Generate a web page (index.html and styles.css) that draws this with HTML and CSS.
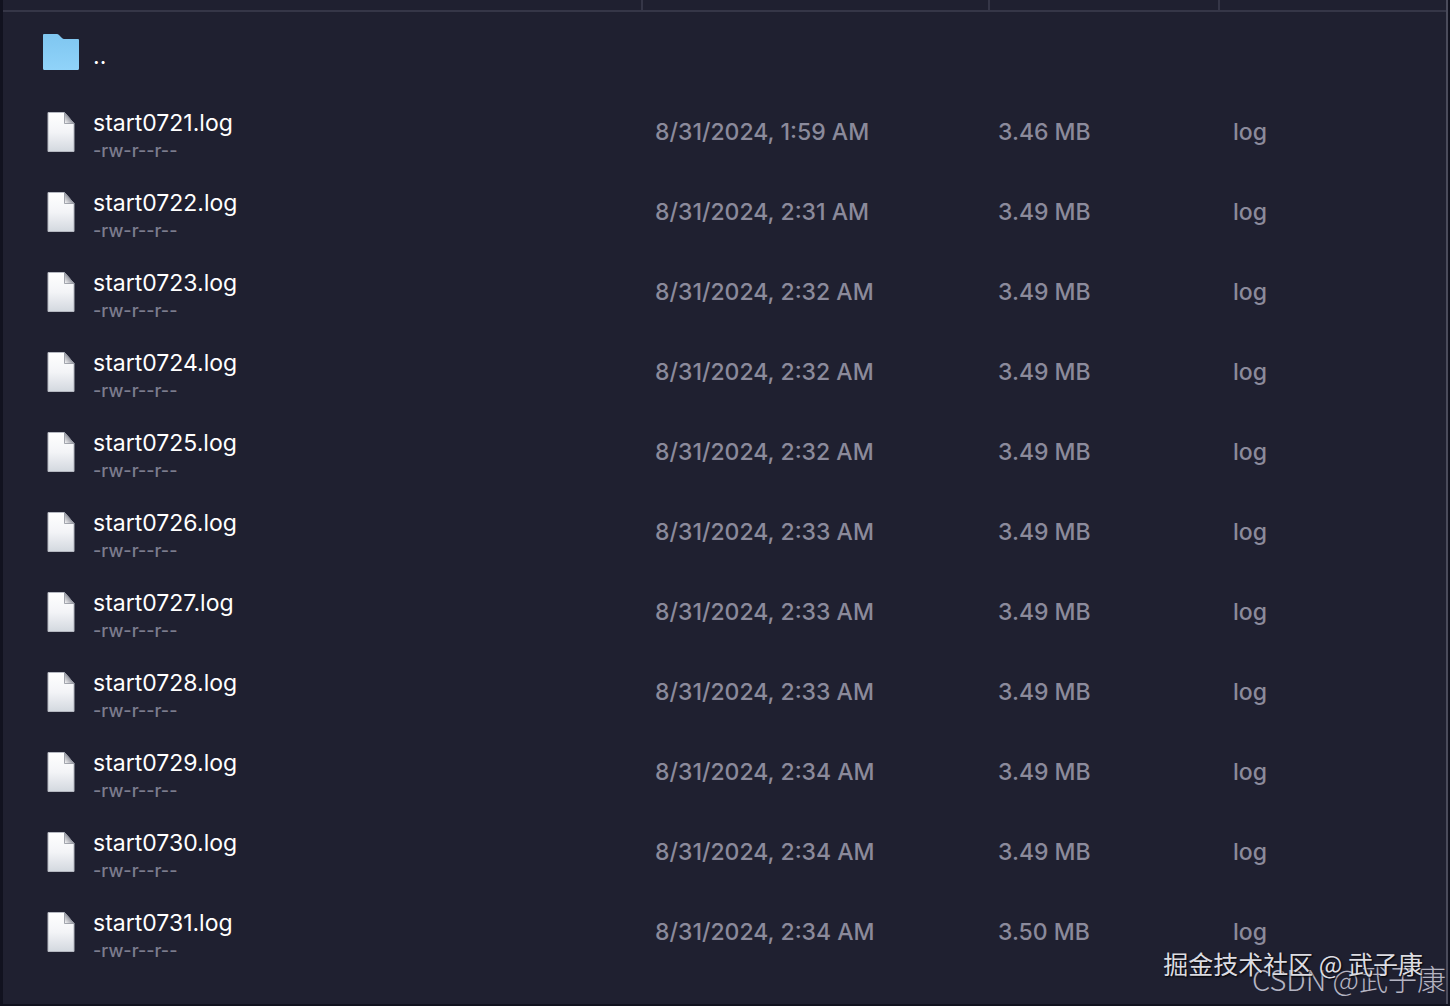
FILE: index.html
```html
<!DOCTYPE html>
<html lang="en">
<head>
  <meta charset="UTF-8">
  <title>Files</title>
  <link rel="stylesheet" href="styles.css">
</head>
<body>
  <svg class="defs" aria-hidden="true">
    <defs>
      <linearGradient id="folderFill" x1="0" y1="0" x2="0" y2="1">
        <stop offset="0" stop-color="#7fc6f0"/>
        <stop offset="1" stop-color="#90d3f9"/>
      </linearGradient>
      <linearGradient id="pageFill" x1="0" y1="0" x2="0" y2="1">
        <stop offset="0" stop-color="#ffffff"/>
        <stop offset="0.5" stop-color="#f3f4f7"/>
        <stop offset="1" stop-color="#d3d8df"/>
      </linearGradient>
      <linearGradient id="foldFill" x1="0" y1="1" x2="1" y2="0">
        <stop offset="0" stop-color="#ffffff"/>
        <stop offset="0.5" stop-color="#9a9ca5"/>
      </linearGradient>
      <symbol id="folder" viewBox="0 0 36 36">
        <path fill="url(#folderFill)" d="M1 0H14Q15 0 16 1L19 4Q20 5 21 5H35Q36 5 36 6V34.500Q36 36 34.500 36H1.500Q0 36 0 34.500V1Q0 0 1 0Z"/>
      </symbol>
      <symbol id="file" viewBox="0 0 36 42">
        <path fill="url(#pageFill)" stroke="#b4b7c0" d="M5 1.500H21.500L31 12.500V40.500H5Z"/>
        <path fill="url(#foldFill)" stroke="#8d909b" stroke-width="0.800" d="M21.500 1.500V12.500H31Z"/>
      </symbol>
    </defs>
  </svg>

  <main class="panel">
    <table class="files">
      <thead>
        <tr><th class="name-col"></th><th class="date-col"></th><th class="size-col"></th><th class="kind-col"></th></tr>
      </thead>
      <tbody>
        <tr>
          <td><div class="entry"><svg class="icon"><use href="#folder"/></svg><div class="info"><div class="name">..</div></div></div></td>
          <td></td><td></td><td></td>
        </tr>
        <tr>
          <td><div class="entry"><svg class="icon"><use href="#file"/></svg><div class="info"><div class="name">start0721.log</div><div class="perms">-rw-r--r--</div></div></div></td>
          <td>8/31/2024, 1:59 AM</td><td>3.46 MB</td><td>log</td>
        </tr>
        <tr>
          <td><div class="entry"><svg class="icon"><use href="#file"/></svg><div class="info"><div class="name">start0722.log</div><div class="perms">-rw-r--r--</div></div></div></td>
          <td>8/31/2024, 2:31 AM</td><td>3.49 MB</td><td>log</td>
        </tr>
        <tr>
          <td><div class="entry"><svg class="icon"><use href="#file"/></svg><div class="info"><div class="name">start0723.log</div><div class="perms">-rw-r--r--</div></div></div></td>
          <td>8/31/2024, 2:32 AM</td><td>3.49 MB</td><td>log</td>
        </tr>
        <tr>
          <td><div class="entry"><svg class="icon"><use href="#file"/></svg><div class="info"><div class="name">start0724.log</div><div class="perms">-rw-r--r--</div></div></div></td>
          <td>8/31/2024, 2:32 AM</td><td>3.49 MB</td><td>log</td>
        </tr>
        <tr>
          <td><div class="entry"><svg class="icon"><use href="#file"/></svg><div class="info"><div class="name">start0725.log</div><div class="perms">-rw-r--r--</div></div></div></td>
          <td>8/31/2024, 2:32 AM</td><td>3.49 MB</td><td>log</td>
        </tr>
        <tr>
          <td><div class="entry"><svg class="icon"><use href="#file"/></svg><div class="info"><div class="name">start0726.log</div><div class="perms">-rw-r--r--</div></div></div></td>
          <td>8/31/2024, 2:33 AM</td><td>3.49 MB</td><td>log</td>
        </tr>
        <tr>
          <td><div class="entry"><svg class="icon"><use href="#file"/></svg><div class="info"><div class="name">start0727.log</div><div class="perms">-rw-r--r--</div></div></div></td>
          <td>8/31/2024, 2:33 AM</td><td>3.49 MB</td><td>log</td>
        </tr>
        <tr>
          <td><div class="entry"><svg class="icon"><use href="#file"/></svg><div class="info"><div class="name">start0728.log</div><div class="perms">-rw-r--r--</div></div></div></td>
          <td>8/31/2024, 2:33 AM</td><td>3.49 MB</td><td>log</td>
        </tr>
        <tr>
          <td><div class="entry"><svg class="icon"><use href="#file"/></svg><div class="info"><div class="name">start0729.log</div><div class="perms">-rw-r--r--</div></div></div></td>
          <td>8/31/2024, 2:34 AM</td><td>3.49 MB</td><td>log</td>
        </tr>
        <tr>
          <td><div class="entry"><svg class="icon"><use href="#file"/></svg><div class="info"><div class="name">start0730.log</div><div class="perms">-rw-r--r--</div></div></div></td>
          <td>8/31/2024, 2:34 AM</td><td>3.49 MB</td><td>log</td>
        </tr>
        <tr>
          <td><div class="entry"><svg class="icon"><use href="#file"/></svg><div class="info"><div class="name">start0731.log</div><div class="perms">-rw-r--r--</div></div></div></td>
          <td>8/31/2024, 2:34 AM</td><td>3.50 MB</td><td>log</td>
        </tr>
      </tbody>
    </table>
  </main>

  <div class="mark mark-csdn">CSDN @武子康</div>
  <div class="mark mark-juejin">掘金技术社区 @ 武子康</div>
</body>
</html>
```

FILE: styles.css
```css
* { box-sizing: border-box; }
body {
  margin: 0;
  min-height: 100vh;
  display: flex;
  position: relative;
  overflow: hidden;
  background: #11121f;
  color: #8b8a9b;
  font-family: Inter, "Noto Sans CJK SC", sans-serif;
  font-size: 23px;
  font-weight: 500;
}
.defs { position: absolute; width: 0; height: 0; }
.panel {
  flex: 1;
  margin: 0 2px 2px 3px;
  background: #1f2030;
  border-right: 2px solid #4a4b5b;
}
.files {
  width: 100%;
  table-layout: fixed;
  border-collapse: separate;
  border-spacing: 0;
}
.files th {
  height: 12px;
  padding: 0;
  border-right: 2px solid #353647;
  border-bottom: 2px solid #353647;
}
.files th:last-child { border-right: 0; }
.date-col { width: 347px; }
.size-col { width: 230px; }
.kind-col { width: 226px; }
.files td {
  height: 80px;
  padding: 0 0 0 13px;
  font-weight: 400;
  line-height: 28px;
  white-space: nowrap;
}
.files td:nth-child(2) { padding-left: 12px; font-weight: 500; }
.files td:nth-child(3) { padding-left: 8px; font-weight: 500; }
.files td:last-child { font-weight: 500; }
.files td:first-child { padding-left: 40px; }
.entry { display: flex; align-items: center; gap: 14px; }
.icon { width: 36px; height: 42px; flex: none; }
.info { padding-top: 8px; }
.name {
  color: #fff;
  line-height: 25px;
  overflow: hidden;
}
.perms {
  margin-top: 4px;
  color: #7c7c8e;
  font-size: 18px;
  font-weight: 500;
  line-height: 22px;
}
.mark {
  position: absolute;
  font-family: "Noto Sans CJK SC", sans-serif;
  white-space: nowrap;
}
.mark-csdn {
  right: 4px;
  bottom: 8px;
  color: #b4b4c2;
  font-size: 29px;
  font-weight: 300;
  line-height: 40px;
}
.mark-juejin {
  right: 27px;
  bottom: 24px;
  color: #dcdce2;
  font-size: 25px;
  font-weight: 400;
  line-height: 38px;
  text-shadow: 1px 1px 2px #000;
}
```
